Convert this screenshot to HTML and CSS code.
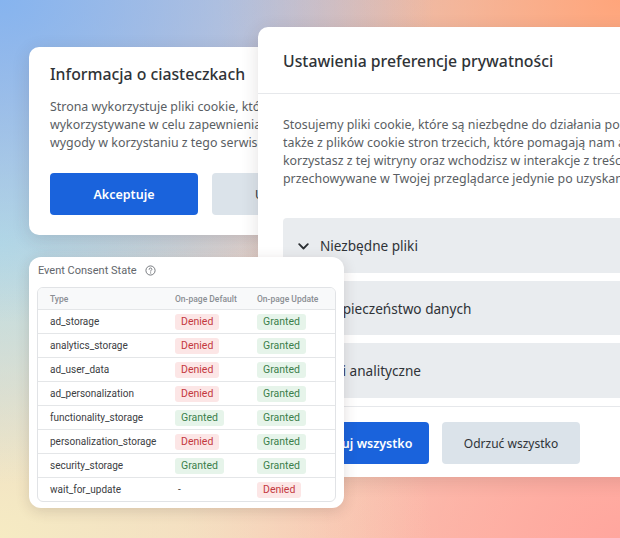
FILE: index.html
```html
<!DOCTYPE html>
<html lang="pl">
<head>
<meta charset="utf-8">
<title>Cookie consent</title>
<link rel="stylesheet" href="styles.css">
</head>
<body>
<div class="desk">
  <section class="win win-info">
    <h2 class="info-title">Informacja o ciasteczkach</h2>
    <p class="info-text">Strona wykorzystuje pliki cookie, które są<br>wykorzystywane w celu zapewnienia Ci<br>wygody w korzystaniu z tego serwisu.</p>
    <div class="btn-row">
      <button class="btn btn-primary btn-info">Akceptuje</button>
      <button class="btn btn-secondary btn-info">Ustawienia</button>
    </div>
  </section>

  <section class="win win-prefs">
    <header class="prefs-head">
      <h2 class="prefs-title">Ustawienia preferencje prywatności</h2>
    </header>
    <div class="prefs-body">
      <p class="prefs-text">Stosujemy pliki cookie, które są niezbędne do działania poprawnego strony. Korzystamy<br>także z plików cookie stron trzecich, które pomagają nam analizować i rozumieć, jak<br>korzystasz z tej witryny oraz wchodzisz w interakcje z treścią. Te pliki cookie będą<br>przechowywane w Twojej przeglądarce jedynie po uzyskaniu Twojej zgody.</p>
      <div class="acc">
        <div class="acc-item">
          <svg class="chev" width="11" height="7" viewBox="0 0 11 7"><path d="M1.2 1.2 L5.5 5.5 L9.8 1.2" fill="none" stroke="#2b2f33" stroke-width="1.8" stroke-linecap="round" stroke-linejoin="round"/></svg>
          <span>Niezbędne pliki</span>
        </div>
        <div class="acc-item">
          <svg class="chev" width="11" height="7" viewBox="0 0 11 7"><path d="M1.2 1.2 L5.5 5.5 L9.8 1.2" fill="none" stroke="#2b2f33" stroke-width="1.8" stroke-linecap="round" stroke-linejoin="round"/></svg>
          <span>Bezpieczeństwo danych</span>
        </div>
        <div class="acc-item">
          <svg class="chev" width="11" height="7" viewBox="0 0 11 7"><path d="M1.2 1.2 L5.5 5.5 L9.8 1.2" fill="none" stroke="#2b2f33" stroke-width="1.8" stroke-linecap="round" stroke-linejoin="round"/></svg>
          <span>Pliki analityczne</span>
        </div>
      </div>
    </div>
    <footer class="prefs-foot">
      <button class="btn btn-primary btn-all">Akceptuj wszystko</button>
      <button class="btn btn-secondary btn-all">Odrzuć wszystko</button>
    </footer>
  </section>

  <section class="win win-consent">
    <div class="consent-title">
      <span>Event Consent State</span>
      <svg class="help" width="11" height="11" viewBox="0 0 12 12"><circle cx="6" cy="6" r="5" fill="none" stroke="#6b6f74" stroke-width="1"/><path d="M4.5 4.7 C4.5 3.8 5.2 3.3 6 3.3 C6.8 3.3 7.5 3.8 7.5 4.6 C7.5 5.5 6.2 5.6 6.2 6.7" fill="none" stroke="#6b6f74" stroke-width="1" stroke-linecap="round"/><circle cx="6.2" cy="8.6" r="0.6" fill="#6b6f74"/></svg>
    </div>
    <div class="ctable">
      <div class="crow chead"><span>Type</span><span>On-page Default</span><span>On-page Update</span></div>
      <div class="crow"><span>ad_storage</span><span><b class="badge no">Denied</b></span><span><b class="badge yes">Granted</b></span></div>
      <div class="crow"><span>analytics_storage</span><span><b class="badge no">Denied</b></span><span><b class="badge yes">Granted</b></span></div>
      <div class="crow"><span>ad_user_data</span><span><b class="badge no">Denied</b></span><span><b class="badge yes">Granted</b></span></div>
      <div class="crow"><span>ad_personalization</span><span><b class="badge no">Denied</b></span><span><b class="badge yes">Granted</b></span></div>
      <div class="crow"><span>functionality_storage</span><span><b class="badge yes">Granted</b></span><span><b class="badge yes">Granted</b></span></div>
      <div class="crow"><span>personalization_storage</span><span><b class="badge no">Denied</b></span><span><b class="badge yes">Granted</b></span></div>
      <div class="crow"><span>security_storage</span><span><b class="badge yes">Granted</b></span><span><b class="badge yes">Granted</b></span></div>
      <div class="crow"><span>wait_for_update</span><span class="dash">-</span><span><b class="badge no">Denied</b></span></div>
    </div>
  </section>
</div>
</body>
</html>
```

FILE: styles.css
```css
* { box-sizing: border-box; }
html, body { margin: 0; padding: 0; }
body { font-family: "Noto Sans", "Open Sans", sans-serif; }

.desk {
  position: relative;
  width: 620px;
  height: 538px;
  overflow: hidden;
  background:
    radial-gradient(ellipse 70% 60% at 0% 0%, #86b4ef 0%, rgba(134,180,239,0) 100%),
    radial-gradient(ellipse 65% 60% at 100% 0%, #ffa57b 0%, rgba(255,165,123,0) 100%),
    radial-gradient(ellipse 45% 45% at 0% 45%, #bfe1e3 0%, rgba(191,225,227,0) 100%),
    radial-gradient(ellipse 70% 60% at 0% 100%, #f6ebc3 0%, rgba(246,235,195,0) 100%),
    radial-gradient(ellipse 70% 60% at 100% 100%, #ffa69e 0%, rgba(255,166,158,0) 100%),
    linear-gradient(135deg, #c6c6d9 0%, #f1d2c0 60%, #ffc3ac 100%);
}

.win {
  position: absolute;
  background: #fff;
  box-shadow: 0 4px 18px rgba(60, 40, 40, 0.14);
}

/* Card 1 */
.win-info {
  left: 29px;
  top: 47px;
  width: 320px;
  height: 188px;
  border-radius: 10px;
  padding: 16px 21px 20px;
  display: flex;
  flex-direction: column;
}
.info-title {
  margin: 0;
  font-size: 15.8px;
  line-height: 22px;
  font-weight: 500;
  color: #2f3337;
  white-space: nowrap;
}
.info-text {
  margin: 13px 0 0;
  font-size: 12.4px;
  line-height: 18px;
  color: #5a5e63;
  white-space: nowrap;
}
.btn-row {
  display: flex;
  gap: 14px;
  margin-top: 21px;
}
.btn {
  height: 42px;
  border: 0;
  border-radius: 4px;
  font-family: "Noto Sans", "Open Sans", sans-serif;
  font-size: 12px;
  padding: 0;
  flex: none;
}
.btn-primary { background: #1a63dc; color: #fff; font-weight: 600; font-size: 12.5px; }
.btn-secondary { background: #dbe3ea; color: #2f3337; }
.btn-info { width: 148px; }

/* Card 2 */
.win-prefs {
  left: 258px;
  top: 27px;
  width: 420px;
  height: 450px;
  border-radius: 10px;
  display: flex;
  flex-direction: column;
}
.prefs-head {
  height: 67px;
  padding: 22px 25px 0;
  border-bottom: 1px solid #e6e8eb;
}
.prefs-title {
  margin: 0;
  font-size: 15.8px;
  line-height: 24px;
  font-weight: 500;
  color: #2f3337;
  white-space: nowrap;
}
.prefs-body {
  padding: 22px 0 8px 25px;
}
.prefs-text {
  margin: 0;
  font-size: 12.4px;
  line-height: 18px;
  color: #5a5e63;
  white-space: nowrap;
}
.acc {
  margin-top: 30px;
  display: flex;
  flex-direction: column;
  gap: 8px;
}
.acc-item {
  height: 55px;
  background: #e9ecef;
  border-radius: 4px 0 0 4px;
  display: flex;
  align-items: center;
  gap: 11px;
  padding-left: 15px;
  font-size: 13.6px;
  color: #2f3337;
  white-space: nowrap;
}
.acc-item:nth-child(2) { height: 54px; }
.chev { flex: none; margin-top: 1px; }
.prefs-foot {
  border-top: 1px solid #e6e8eb;
  padding: 15px 25px 0;
  display: flex;
  gap: 13px;
}
.btn-all.btn-primary { width: 146px; }
.btn-all.btn-secondary { width: 138px; }

/* Card 3 */
.win-consent {
  left: 29px;
  top: 257px;
  width: 315px;
  height: 251px;
  border-radius: 12px;
  padding: 5px 8px 8px;
  font-family: Roboto, "Noto Sans", sans-serif;
  box-shadow: 0 3px 14px rgba(60, 40, 40, 0.16);
}
.consent-title {
  height: 16px;
  display: flex;
  align-items: center;
  gap: 8px;
  padding-left: 1px;
  font-size: 11px;
  color: #62666b;
}
.help { flex: none; }
.ctable {
  margin-top: 9px;
  border: 1px solid #e1e3e6;
  border-radius: 6px;
  overflow: hidden;
}
.crow {
  display: grid;
  grid-template-columns: 137px 82px 1fr;
  align-items: center;
  height: 24px;
  border-top: 1px solid #e4e6e8;
  font-size: 10px;
  color: #3c4043;
}
.crow > span:first-child { padding-left: 12px; }
.crow.chead {
  border-top: 0;
  height: 21px;
  background: #f8f9fa;
  font-size: 8.5px;
  font-weight: 500;
  color: #8a8e93;
}
.dash { padding-left: 3px; }
.badge {
  display: inline-block;
  height: 16px;
  line-height: 16px;
  padding: 0 6px;
  border-radius: 3px;
  font-weight: 400;
  font-size: 10.5px;
}
.badge.no { background: #fce6e6; color: #c4393f; }
.badge.yes { background: #e6f4ea; color: #3b7f4a; }
```
